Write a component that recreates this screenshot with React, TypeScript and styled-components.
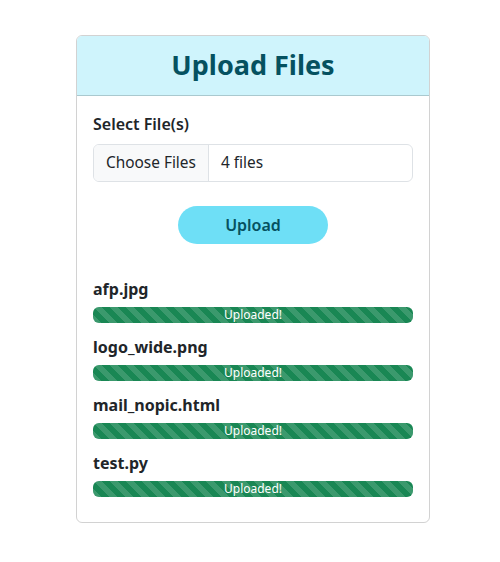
import React from "react";
import styled, { createGlobalStyle } from "styled-components";

const Global = createGlobalStyle`
  html, body { margin: 0; padding: 0; background: #fff; }
  body {
    font-family: "Noto Sans", "Open Sans", sans-serif;
    color: #212529;
    font-size: 16px;
    line-height: 1.5;
  }
  * { box-sizing: border-box; }
`;

const Page = styled.div`
  padding: 35px 0 0 76px;
`;

const Card = styled.div`
  width: 354px;
  border: 1px solid rgba(0, 0, 0, 0.175);
  border-radius: 6px;
  overflow: hidden;
`;

const Header = styled.div`
  background: #cff4fc;
  border-bottom: 1px solid rgba(0, 0, 0, 0.175);
  height: 60px;
  display: flex;
  align-items: center;
  justify-content: center;
`;

const Title = styled.h2`
  margin: 0;
  font-size: 27px;
  font-weight: 700;
  color: #055160;
  line-height: 1.2;
`;

const Body = styled.div`
  padding: 16px 16px 25px;
`;

const Label = styled.div`
  font-weight: 600;
  margin-bottom: 8px;
`;

const FileInput = styled.div`
  display: flex;
  height: 38px;
  border: 1px solid #dee2e6;
  border-radius: 6px;
  overflow: hidden;
  margin-bottom: 24px;
  font-size: 15.4px;
`;

const ChooseBtn = styled.div`
  background: #f8f9fa;
  border-right: 1px solid #dee2e6;
  padding: 0 12px;
  display: flex;
  align-items: center;
`;

const FileCount = styled.div`
  padding: 0 12px;
  display: flex;
  align-items: center;
`;

const Center = styled.div`
  display: flex;
  justify-content: center;
  margin-bottom: 33px;
`;

const UploadBtn = styled.button`
  width: 150px;
  height: 38px;
  border: none;
  border-radius: 19px;
  background: #6edff6;
  color: #055160;
  font-family: inherit;
  font-size: 16px;
  font-weight: 600;
`;

const FileName = styled.div`
  font-weight: 700;
  margin-bottom: 6px;
`;

const Progress = styled.div`
  height: 16px;
  border-radius: 6px;
  overflow: hidden;
  background: #e9ecef;
  margin-bottom: 12px;
  &:last-child { margin-bottom: 0; }
`;

const Bar = styled.div`
  height: 100%;
  background-color: #198754;
  background-image: linear-gradient(
    45deg,
    rgba(255, 255, 255, 0.15) 25%,
    transparent 25%,
    transparent 50%,
    rgba(255, 255, 255, 0.15) 50%,
    rgba(255, 255, 255, 0.15) 75%,
    transparent 75%,
    transparent
  );
  background-size: 16px 16px;
  color: #fff;
  font-size: 12px;
  line-height: 16px;
  text-align: center;
`;

const files = ["afp.jpg", "logo_wide.png", "mail_nopic.html", "test.py"];

export default function App() {
  return (
    <>
      <Global />
      <Page>
        <Card>
          <Header>
            <Title>Upload Files</Title>
          </Header>
          <Body>
            <Label>Select File(s)</Label>
            <FileInput>
              <ChooseBtn>Choose Files</ChooseBtn>
              <FileCount>4 files</FileCount>
            </FileInput>
            <Center>
              <UploadBtn>Upload</UploadBtn>
            </Center>
            {files.map((f) => (
              <React.Fragment key={f}>
                <FileName>{f}</FileName>
                <Progress>
                  <Bar style={{ width: "100%" }}>Uploaded!</Bar>
                </Progress>
              </React.Fragment>
            ))}
          </Body>
        </Card>
      </Page>
    </>
  );
}
